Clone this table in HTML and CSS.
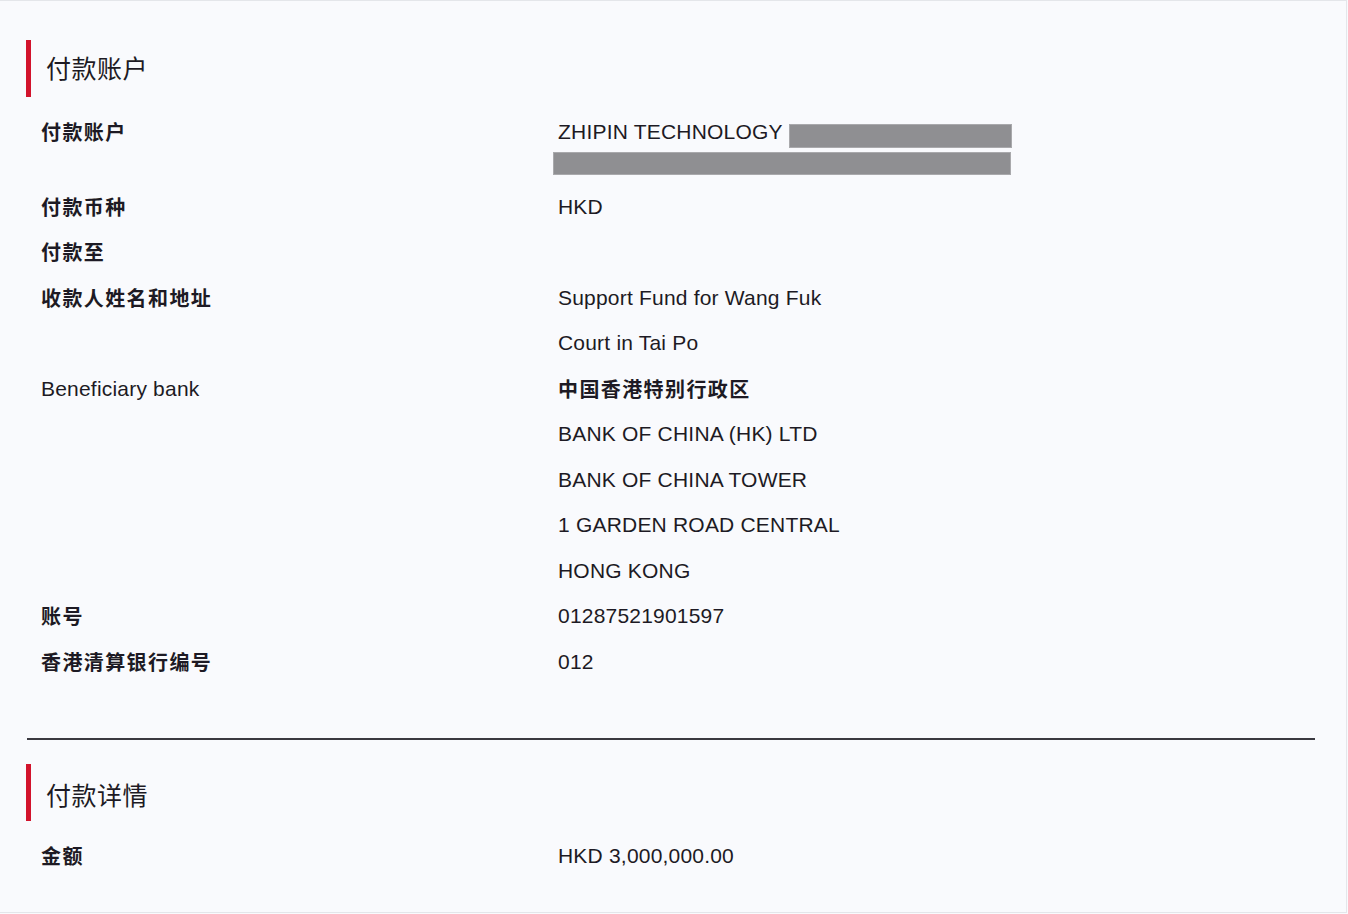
FILE: index.html
```html
<!DOCTYPE html>
<html lang="zh-CN">
<head>
<meta charset="utf-8">
<title>付款账户</title>
<link rel="stylesheet" href="styles.css">
</head>
<body>
<div class="page">
  <section class="section">
    <h2 class="sec-title">付款账户</h2>
    <div class="rows">
      <div class="row row-first">
        <div class="label cjk">付款账户</div>
        <div class="value">
          <div class="line">ZHIPIN TECHNOLOGY <span class="mask mask-inline"></span></div>
          <div class="mask mask-block"></div>
        </div>
      </div>
      <div class="row">
        <div class="label cjk">付款币种</div>
        <div class="value"><div class="line">HKD</div></div>
      </div>
      <div class="row">
        <div class="label cjk">付款至</div>
        <div class="value"><div class="line">&nbsp;</div></div>
      </div>
      <div class="row">
        <div class="label cjk">收款人姓名和地址</div>
        <div class="value">
          <div class="line">Support Fund for Wang Fuk</div>
          <div class="line">Court in Tai Po</div>
        </div>
      </div>
      <div class="row">
        <div class="label">Beneficiary bank</div>
        <div class="value">
          <div class="line cjk">中国香港特别行政区</div>
          <div class="line">BANK OF CHINA (HK) LTD</div>
          <div class="line">BANK OF CHINA TOWER</div>
          <div class="line">1 GARDEN ROAD CENTRAL</div>
          <div class="line">HONG KONG</div>
        </div>
      </div>
      <div class="row">
        <div class="label cjk">账号</div>
        <div class="value"><div class="line">01287521901597</div></div>
      </div>
      <div class="row">
        <div class="label cjk">香港清算银行编号</div>
        <div class="value"><div class="line">012</div></div>
      </div>
    </div>
  </section>
  <hr class="divider">
  <section class="section">
    <h2 class="sec-title sec-title-2">付款详情</h2>
    <div class="rows">
      <div class="row">
        <div class="label cjk">金额</div>
        <div class="value"><div class="line">HKD 3,000,000.00</div></div>
      </div>
    </div>
  </section>
</div>
</body>
</html>
```

FILE: styles.css
```css
html, body {
  margin: 0;
  padding: 0;
  background: #f9fafd;
}
body {
  font-family: "Liberation Sans", Arial, "Noto Sans CJK SC", sans-serif;
  color: #1d1a24;
}
.page {
  box-sizing: border-box;
  width: 1347px;
  height: 913px;
  border-top: 1px solid #e4e6ea;
  border-right: 1px solid #e4e6ea;
  border-bottom: 1px solid #e4e6ea;
  padding: 39px 31px 0 26px;
  background: #f9fafd;
  overflow: hidden;
}
.sec-title {
  margin: 0;
  box-sizing: border-box;
  height: 57px;
  border-left: 5px solid #d2132c;
  padding: 0 0 3px 15px;
  display: flex;
  align-items: center;
  font-family: "Noto Sans CJK SC", sans-serif;
  font-weight: 400;
  font-size: 25px;
  letter-spacing: 0.5px;
  color: #1d1a24;
}
.sec-title-2 {
  padding-bottom: 0;
  padding-top: 2px;
}
.rows {
  display: flex;
  flex-direction: column;
  padding-top: 12px;
}
.row {
  display: grid;
  grid-template-columns: 517px 1fr;
  padding-left: 15px;
  font-size: 21px;
  line-height: 45.5px;
  letter-spacing: 0.2px;
}
.row-first {
  padding-bottom: 9px;
}
.label.cjk {
  font-family: "Noto Sans CJK SC", sans-serif;
  font-weight: 700;
  font-size: 20px;
  letter-spacing: 1.4px;
}
.line.cjk {
  font-family: "Noto Sans CJK SC", sans-serif;
  font-weight: 700;
  font-size: 20px;
  letter-spacing: 1.4px;
}
.value {
  display: flex;
  flex-direction: column;
}
.line {
  white-space: nowrap;
}
.mask {
  background: #8f8f92;
  border: 1px solid #a9a9ac;
  box-sizing: border-box;
}
.mask-inline {
  display: inline-block;
  width: 223px;
  height: 24px;
  vertical-align: -9px;
  margin-left: 1px;
}
.mask-block {
  width: 458px;
  height: 23px;
  margin-left: -5px;
  margin-top: -3px;
}
.divider {
  margin: 54px 0 24px 1px;
  border: 0;
  height: 2px;
  background: #3a3940;
}
```
